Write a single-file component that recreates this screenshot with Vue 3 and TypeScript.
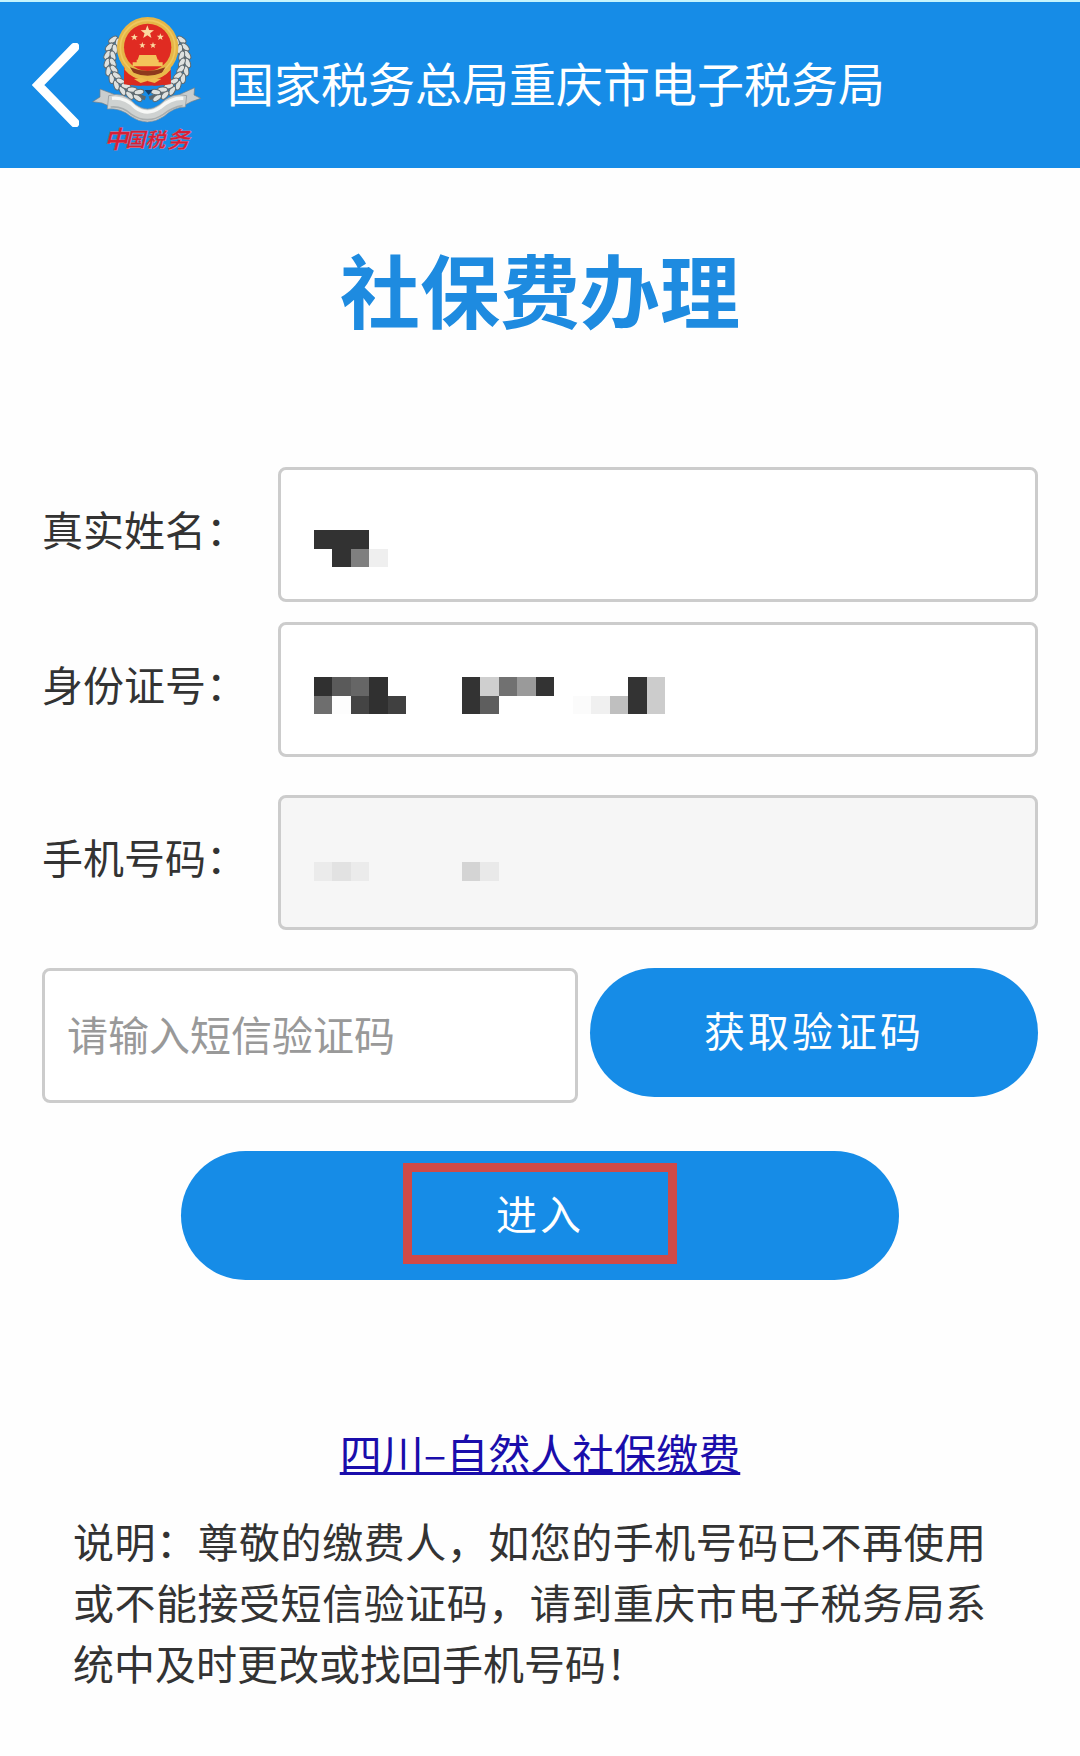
<script setup lang="ts">
import { ref } from 'vue'

interface Cell {
  x: number
  y: number
  fill: string
}

interface Field {
  id: string
  label: string
  disabled: boolean
  cells: Cell[]
}

interface Grain {
  x: number
  y: number
  turn: number
}

const row = (y: number, entries: [number, string][]): Cell[] =>
  entries.map(([x, fill]) => ({ x, y, fill }))

const fields: Field[] = [
  {
    id: 'name',
    label: '真实姓名：',
    disabled: false,
    cells: [
      ...row(0, [[0, '#323232'], [1, '#323232'], [2, '#323232']]),
      ...row(1, [[1, '#323232'], [2, '#7f7f7f'], [3, '#efefef']]),
    ],
  },
  {
    id: 'idno',
    label: '身份证号：',
    disabled: false,
    cells: [
      ...row(0, [
        [0, '#303030'], [1, '#5a5a5a'], [2, '#666666'], [3, '#303030'],
        [8, '#333333'], [9, '#cfcfcf'], [10, '#717171'], [11, '#9a9a9a'], [12, '#333333'],
        [17, '#333333'], [18, '#cccccc'],
      ]),
      ...row(1, [
        [0, '#6e6e6e'], [1, '#fdfdfd'], [2, '#444444'], [3, '#303030'], [4, '#404040'],
        [8, '#333333'], [9, '#5e5e5e'],
        [14, '#fbfbfb'], [15, '#f0f0f0'], [16, '#bfbfbf'], [17, '#333333'], [18, '#cccccc'],
      ]),
    ],
  },
  {
    id: 'phone',
    label: '手机号码：',
    disabled: true,
    cells: row(0, [[0, '#ebebeb'], [1, '#e2e2e2'], [2, '#ebebeb'], [8, '#d4d4d4'], [9, '#e9e9e9']]),
  },
]

// Ears of wheat: grains in two rows along an ellipse on the emblem's left side.
const ear = (rx: number, ry: number, lean: number): Grain[] =>
  Array.from({ length: 10 }, (_, i) => {
    const deg = 212 - i * 12
    const a = (deg * Math.PI) / 180
    return { x: 442 + rx * Math.cos(a), y: 176 + ry * Math.sin(a), turn: deg + 90 + lean }
  })
const grains: Grain[] = [...ear(121, 116, 24), ...ear(104, 98, -24)]

const star = (cx: number, cy: number, r: number): string =>
  Array.from({ length: 10 }, (_, i) => {
    const a = (i * Math.PI) / 5 - Math.PI / 2
    const d = i % 2 ? r * 0.42 : r
    return `${(cx + d * Math.cos(a)).toFixed(1)},${(cy + d * Math.sin(a)).toFixed(1)}`
  }).join(' ')
const stars: string[] = [
  star(442, 92, 21),
  star(403, 107, 11),
  star(481, 106, 11),
  star(427, 131, 10),
  star(459, 131, 10),
]

const code = ref('')
</script>

<template>
  <div class="page">
    <header class="bar">
      <button class="back" type="button" aria-label="返回">
        <svg viewBox="0 0 47 84" width="47" height="84">
          <path d="M43 4 6 42l37 38" fill="none" stroke="#fff" stroke-width="9" stroke-linecap="round" />
        </svg>
      </button>
      <svg class="emblem" viewBox="276 40 330 420" width="110" height="140" aria-hidden="true">
        <g v-for="side in 2" :key="side" :transform="side === 2 ? 'translate(884 0) scale(-1 1)' : undefined">
          <path d="M338 118C318 190 346 258 436 290" fill="none" stroke="#5d686e" stroke-width="12" />
          <ellipse
            v-for="(g, i) in grains"
            :key="i"
            rx="15"
            ry="8"
            :transform="`translate(${g.x} ${g.y}) rotate(${g.turn})`"
            fill="#dfe2e0"
            stroke="#5f696e"
            stroke-width="3"
          />
        </g>
        <path d="M372 190h140v56q-70 12-140 0z" fill="#de2a1f" />
        <circle cx="443" cy="138" r="92" fill="#e6b647" />
        <circle cx="443" cy="138" r="82" fill="none" stroke="#efc85f" stroke-width="5" />
        <circle cx="443" cy="137" r="71" fill="#e02b22" />
        <polygon v-for="p in stars" :key="p" :points="p" fill="#fbd9a0" />
        <path d="M418 160h50l5 14h-60zM410 174h66v8h12v12h-90v-12h12z" fill="#f4c45a" />
        <path d="M390 197q53 22 106 0l-10 16q-43 18-86 0z" fill="#8e3a1c" />
        <path d="M374 186q24 38 69 38t69-38v18q-25 32-69 32t-69-32z" fill="#e9b94a" />
        <path d="M372 206q20 28 71 30 51-2 69-30v42q-30 4-50 4l-19-8-21 8q-26 0-50-4z" fill="#d92b20" />
        <path d="M402 232l22-4 18 8 20-8 22 4-20 12-22-6-20 6z" fill="#f0bd4e" />
        <path d="M434 265h24l-12 15z" fill="#153f69" />
        <path d="M300 262l42 16-8 38-28-12-28-4 22-14zM584 258l-44 20 8 36 26-14 28-10-20-10z" fill="#c9cdce" stroke="#737d83" stroke-width="2" />
        <path d="M326 282q45-14 80 26 36 28 74 0 36-38 80-26l-4 34q-34 0-64 28-50 34-100 0-30-26-70-22z" fill="#cfd2d1" stroke="#8a9195" stroke-width="2" />
        <path d="M336 290q40-4 70 28 36 26 74 0 34-30 70-28" fill="none" stroke="#f7f8f6" stroke-width="10" />
        <path d="M332 316q34-4 62 22 48 32 96 0 28-22 58-26" fill="none" stroke="#a9aeaf" stroke-width="5" />
        <text class="brush">
          <tspan x="312" y="440" font-size="72">中</tspan>
          <tspan x="376" y="436" font-size="60">国</tspan>
          <tspan x="436" y="436" font-size="60">税</tspan>
          <tspan x="500" y="438" font-size="68">务</tspan>
        </text>
      </svg>
      <span class="org">国家税务总局重庆市电子税务局</span>
    </header>

    <main class="content">
      <h1 class="title">社保费办理</h1>

      <form class="form" @submit.prevent>
        <div v-for="f in fields" :key="f.id" class="row" :class="f.id">
          <label class="label" :for="f.id">{{ f.label }}</label>
          <div class="field">
            <input :id="f.id" class="box" type="text" :disabled="f.disabled" />
            <svg class="mask" viewBox="0 0 19 2" shape-rendering="crispEdges" aria-hidden="true">
              <rect v-for="c in f.cells" :key="`${c.x}-${c.y}`" :x="c.x" :y="c.y" width="1" height="1" :fill="c.fill" />
            </svg>
          </div>
        </div>

        <div class="verify">
          <input v-model="code" class="box" type="text" placeholder="请输入短信验证码" aria-label="请输入短信验证码" />
          <button class="pill" type="button">获取验证码</button>
        </div>

        <button class="pill enter" type="submit">进入<span class="frame"></span></button>
      </form>

      <a class="link" href="#">四川–自然人社保缴费</a>
      <p class="note">说明：尊敬的缴费人，如您的手机号码已不再使用或不能接受短信验证码，请到重庆市电子税务局系统中及时更改或找回手机号码！</p>
    </main>
  </div>
</template>

<style>
body {
  margin: 0;
  background: #fefefe;
}
</style>

<style scoped>
.page {
  font-family: "Noto Sans CJK SC", "Noto Sans", sans-serif;
  font-size: 41px;
  line-height: 60px;
  color: #333;
}
.bar {
  display: flex;
  align-items: center;
  height: 166px;
  padding-left: 32px;
  border-top: 2px solid #c4f4fd;
  background: #168ce7;
}
.back {
  display: flex;
  padding: 0;
  border: 0;
  background: none;
}
.emblem {
  flex: none;
  margin: 0 25px 0 13px;
}
.brush {
  font-weight: 700;
  font-style: italic;
  fill: #d81f35;
  stroke: #e08a9c;
  stroke-width: 1px;
}
.org {
  padding-bottom: 6px;
  font-size: 47px;
  color: #fff;
  white-space: nowrap;
}
.content {
  display: flex;
  flex-direction: column;
  align-items: center;
  padding: 59px 42px;
}
.title {
  margin: 0;
  font-size: 80px;
  font-weight: 700;
  line-height: 120px;
  color: #1e8be0;
}
.form {
  display: flex;
  flex-direction: column;
  width: 100%;
  margin-top: 120px;
}
.row {
  display: flex;
  align-items: center;
  margin-bottom: 38px;
}
.row.name {
  margin-bottom: 20px;
}
.label {
  flex: none;
  width: 236px;
  padding-bottom: 14px;
  white-space: nowrap;
}
.field {
  position: relative;
  flex: 1;
  display: flex;
}
.box {
  box-sizing: border-box;
  flex: 1;
  min-width: 0;
  height: 135px;
  padding: 0 22px 6px;
  border: 3px solid #ccc;
  border-radius: 8px;
  background: #fff;
  font: inherit;
  color: inherit;
}
.box:disabled {
  background: #f6f6f6;
}
.box::placeholder {
  color: #999;
  opacity: 1;
}
.mask {
  position: absolute;
  left: 36px;
  top: 63px;
  width: 351px;
  height: 37px;
}
.idno .mask {
  top: 55px;
}
.phone .mask {
  top: 67px;
}
.verify {
  display: grid;
  grid-template-columns: 537fr 449fr;
  align-items: start;
  gap: 12px;
}
.pill {
  height: 129px;
  padding: 0 0 8px;
  border: 0;
  border-radius: 65px;
  background: #168ce7;
  font: inherit;
  letter-spacing: 3px;
  color: #fff;
}
.enter {
  position: relative;
  align-self: center;
  width: 72%;
  min-width: 320px;
  margin-top: 48px;
}
.frame {
  position: absolute;
  inset: 12px 0 16px;
  box-sizing: border-box;
  width: 274px;
  margin: 0 auto;
  border: 9px solid #d04a48;
}
.link {
  margin-top: 142px;
  font-size: 42px;
  color: #1a0dab;
  text-decoration-thickness: 3px;
}
.note {
  align-self: stretch;
  margin: 28px 52px 0 31px;
  line-height: 61px;
  text-align: justify;
}
</style>
